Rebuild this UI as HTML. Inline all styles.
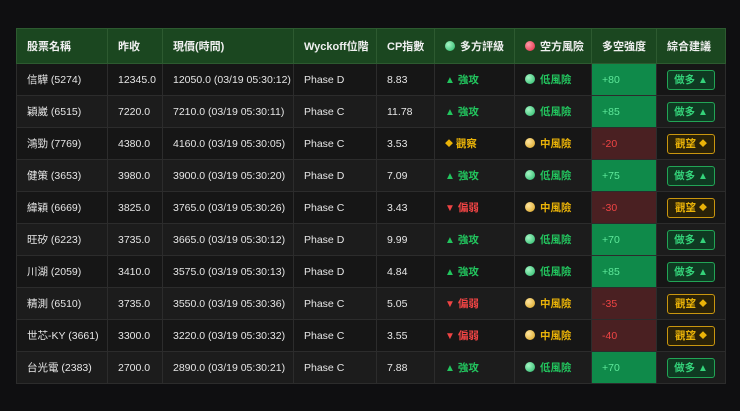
<!DOCTYPE html>
<html><head><meta charset="utf-8"><style>
body{margin:0;background:#0f0f11;width:740px;height:411px;overflow:hidden;font-family:"Liberation Sans","Noto Sans CJK TC",sans-serif;}
table{position:absolute;left:16px;top:28px;border-collapse:collapse;table-layout:fixed;width:709px;font-size:10.5px;color:#e6e6e6}
th,td{border:1px solid #2c2c2c;padding:0 0 0 10px;text-align:left;white-space:nowrap;overflow:hidden;vertical-align:middle}
th{height:34px;background:#1b4720;font-weight:bold;color:#f0f0f0;border-color:#2d5a30;font-size:11px}
td{height:31px}
tr:nth-child(odd) td{background:#1c1c1c}
tr:nth-child(even) td{background:#161616}
.g{color:#22c55e;font-weight:bold}.y{color:#eab308;font-weight:bold}.r{color:#ef4444;font-weight:bold}
.dot{display:inline-block;width:10px;height:10px;border-radius:50%;margin-right:5px;vertical-align:-1px}
.dg{background:radial-gradient(circle at 35% 35%,#a6f5c5,#22b866)}
.dy{background:radial-gradient(circle at 35% 35%,#ffe6a0,#d9a21c)}
.dr{background:radial-gradient(circle at 35% 35%,#ff9aa8,#e0263f)}
td.sg{background:#0f8a4a!important;color:#5ee89a}
td.sr{background:#4a2022!important;color:#ef4444}
.sm{font-size:10px;vertical-align:0px}
.dm{font-size:8px;vertical-align:1px}
.b{display:inline-block;box-sizing:border-box;width:48px;height:20px;line-height:18px;border-radius:3px;text-align:center;font-weight:bold;font-size:10.5px;vertical-align:middle}
.bg{border:1px solid #22a556;background:#0f3a22;color:#34d37a}
.by{border:1px solid #c9960f;background:#2a2208;color:#eab308}
</style></head><body>
<table>
<colgroup><col style="width:91px"><col style="width:55px"><col style="width:131px"><col style="width:83px"><col style="width:58px"><col style="width:80px"><col style="width:77px"><col style="width:65px"><col style="width:69px"></colgroup>
<tr><th>股票名稱</th><th>昨收</th><th>現價(時間)</th><th>Wyckoff位階</th><th>CP指數</th><th><span class="dot dg"></span>多方評級</th><th><span class="dot dr"></span>空方風險</th><th>多空強度</th><th>綜合建議</th></tr>
<tr><td>信驊 (5274)</td><td>12345.0</td><td>12050.0 (03/19 05:30:12)</td><td>Phase D</td><td>8.83</td><td class="g"><span class="sm">▲</span> 強攻</td><td class="g"><span class="dot dg"></span>低風險</td><td class="sg">+80</td><td><span class="b bg">做多 <span class="sm">▲</span></span></td></tr>
<tr><td>穎崴 (6515)</td><td>7220.0</td><td>7210.0 (03/19 05:30:11)</td><td>Phase C</td><td>11.78</td><td class="g"><span class="sm">▲</span> 強攻</td><td class="g"><span class="dot dg"></span>低風險</td><td class="sg">+85</td><td><span class="b bg">做多 <span class="sm">▲</span></span></td></tr>
<tr><td>鴻勁 (7769)</td><td>4380.0</td><td>4160.0 (03/19 05:30:05)</td><td>Phase C</td><td>3.53</td><td class="y"><span class="dm">◆</span> 觀察</td><td class="y"><span class="dot dy"></span>中風險</td><td class="sr">-20</td><td><span class="b by">觀望 <span class="dm">◆</span></span></td></tr>
<tr><td>健策 (3653)</td><td>3980.0</td><td>3900.0 (03/19 05:30:20)</td><td>Phase D</td><td>7.09</td><td class="g"><span class="sm">▲</span> 強攻</td><td class="g"><span class="dot dg"></span>低風險</td><td class="sg">+75</td><td><span class="b bg">做多 <span class="sm">▲</span></span></td></tr>
<tr><td>緯穎 (6669)</td><td>3825.0</td><td>3765.0 (03/19 05:30:26)</td><td>Phase C</td><td>3.43</td><td class="r"><span class="sm">▼</span> 偏弱</td><td class="y"><span class="dot dy"></span>中風險</td><td class="sr">-30</td><td><span class="b by">觀望 <span class="dm">◆</span></span></td></tr>
<tr><td>旺矽 (6223)</td><td>3735.0</td><td>3665.0 (03/19 05:30:12)</td><td>Phase D</td><td>9.99</td><td class="g"><span class="sm">▲</span> 強攻</td><td class="g"><span class="dot dg"></span>低風險</td><td class="sg">+70</td><td><span class="b bg">做多 <span class="sm">▲</span></span></td></tr>
<tr><td>川湖 (2059)</td><td>3410.0</td><td>3575.0 (03/19 05:30:13)</td><td>Phase D</td><td>4.84</td><td class="g"><span class="sm">▲</span> 強攻</td><td class="g"><span class="dot dg"></span>低風險</td><td class="sg">+85</td><td><span class="b bg">做多 <span class="sm">▲</span></span></td></tr>
<tr><td>精測 (6510)</td><td>3735.0</td><td>3550.0 (03/19 05:30:36)</td><td>Phase C</td><td>5.05</td><td class="r"><span class="sm">▼</span> 偏弱</td><td class="y"><span class="dot dy"></span>中風險</td><td class="sr">-35</td><td><span class="b by">觀望 <span class="dm">◆</span></span></td></tr>
<tr><td>世芯-KY (3661)</td><td>3300.0</td><td>3220.0 (03/19 05:30:32)</td><td>Phase C</td><td>3.55</td><td class="r"><span class="sm">▼</span> 偏弱</td><td class="y"><span class="dot dy"></span>中風險</td><td class="sr">-40</td><td><span class="b by">觀望 <span class="dm">◆</span></span></td></tr>
<tr><td>台光電 (2383)</td><td>2700.0</td><td>2890.0 (03/19 05:30:21)</td><td>Phase C</td><td>7.88</td><td class="g"><span class="sm">▲</span> 強攻</td><td class="g"><span class="dot dg"></span>低風險</td><td class="sg">+70</td><td><span class="b bg">做多 <span class="sm">▲</span></span></td></tr>
</table>
</body></html>
